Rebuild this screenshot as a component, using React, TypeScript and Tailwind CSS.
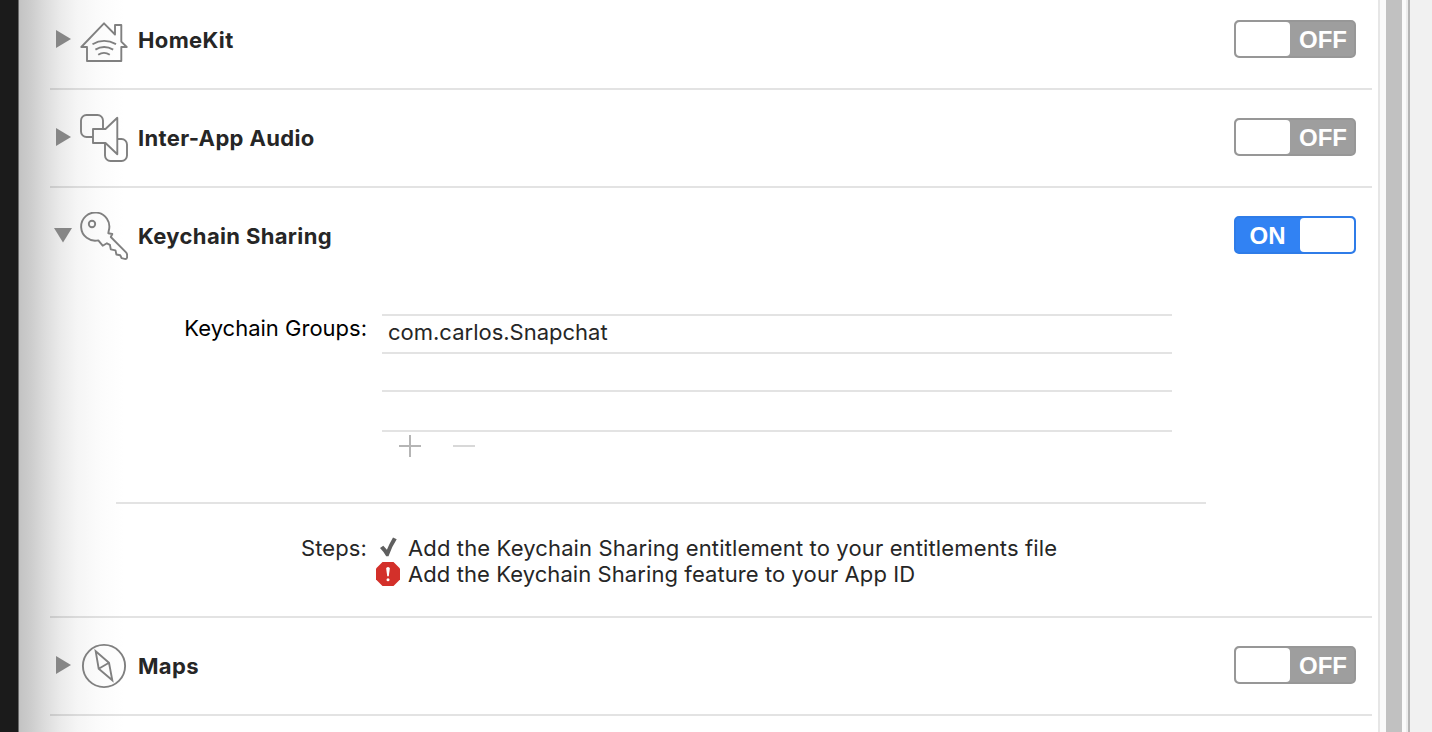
import type { ReactNode } from "react";

function Disclosure({ open }: { open?: boolean }) {
  return (
    <svg className="ml-1 h-[18px] w-[18px] shrink-0 fill-[#868686]" viewBox="0 0 18 18">
      {open ? <path d="M0 2H18L9 16.5Z" /> : <path d="M2 0L17 9L2 18Z" />}
    </svg>
  );
}

function RowIcon({ children }: { children: ReactNode }) {
  return (
    <svg
      className="mt-[2px] ml-2 h-12 w-12 shrink-0"
      viewBox="0 0 48 48"
      fill="none"
      stroke="#808080"
      strokeWidth="1.9"
    >
      {children}
    </svg>
  );
}

function HomeKitIcon() {
  return (
    <RowIcon>
      <path d="M24 7.300L35 18.500V9H41.300V25.600L46.700 31H41.300V45H7V31H1.300Z" strokeLinejoin="round" />
      <path d="M12.500 28.200Q24 21.600 36 28.200M15.400 33.600Q24 28.400 33.200 33.600M18.200 38.800Q24 35 29.800 38.800" />
    </RowIcon>
  );
}

function AudioIcon() {
  return (
    <RowIcon>
      <path d="M13 23H6.500A5.500 5.500 0 0 1 1 17.500V6.500A5.500 5.500 0 0 1 6.500 1H17.500A5.500 5.500 0 0 1 23 6.500V15" />
      <path d="M13 15H25.500L37.300 3.800V40.200L25.500 29H13Z" strokeLinejoin="round" />
      <path d="M25 29V41.500A5.500 5.500 0 0 0 30.500 47H41.500A5.500 5.500 0 0 0 47 41.500V30.500A5.500 5.500 0 0 0 41.500 25H37.300" />
    </RowIcon>
  );
}

function KeyIcon() {
  return (
    <RowIcon>
      <circle cx="12" cy="12" r="3.200" />
      <path
        d="M18.300 28.400A14.100 14.100 0 1 1 28.800 18.500L28.300 21.200L32.300 22L30.800 25L45.800 40.200Q47.200 41.600 47.100 43.200V45.300Q46.800 47.200 44.600 46.900L41.700 46.200L40.200 43.300L36.400 42.500L35.500 38.400L30.800 37.400L29.900 32.800L26.900 31.300L22.700 33.700Z"
        strokeLinejoin="round"
      />
    </RowIcon>
  );
}

function MapsIcon() {
  return (
    <RowIcon>
      <circle cx="24" cy="24" r="21.100" />
      <path d="M15.700 9.300L29 20.700L32.300 38.300L18.700 26.700ZM18.700 26.700L29 20.700" />
    </RowIcon>
  );
}

function Toggle({ on }: { on?: boolean }) {
  return on ? (
    <div className="mr-4 ml-auto flex h-[38px] w-[122px] items-center rounded-[5px] border-2 border-[#2f7ce8] bg-[#3182f3]">
      <span className="flex-1 pt-px pr-px text-center font-['Liberation_Sans',sans-serif] text-2xl leading-[34px] font-bold text-white">ON</span>
      <span className="h-[34px] w-[54px] rounded-[4px] bg-white" />
    </div>
  ) : (
    <div className="mr-4 ml-auto flex h-[38px] w-[122px] items-center rounded-[5px] border-2 border-[#979797] bg-[#9e9e9e]">
      <span className="h-[34px] w-[54px] rounded-[4px] bg-white" />
      <span className="flex-1 pt-px pl-[2px] text-center font-['Liberation_Sans',sans-serif] text-2xl leading-[34px] font-bold text-white">OFF</span>
    </div>
  );
}

function Header({ icon, title, open }: { icon: ReactNode; title: string; open?: boolean }) {
  return (
    <div className="flex h-[94px] items-center">
      <Disclosure open={open} />
      {icon}
      <h2 className="ml-[10px] pt-[2px] text-[22px] leading-7 font-bold tracking-[0.35px] whitespace-nowrap text-[#262626]">{title}</h2>
      <Toggle on={open} />
    </div>
  );
}

function Row({ children }: { children: ReactNode }) {
  return <section className="shrink-0 border-b-2 border-black/11 pb-[2px]">{children}</section>;
}

function KeychainDetails() {
  return (
    <div className="h-[332px] pt-8">
      <div className="flex">
        <div className="w-[317px] text-right text-[22px] leading-7 text-black">Keychain Groups:</div>
        <div className="ml-[15px] w-[790px]">
          <div className="h-10 border-y-2 border-[#e3e3e3] pl-[6px] text-[22px] leading-[33px] text-[#262626]">
            com.carlos.Snapchat
          </div>
          <div className="h-[38px] border-b-2 border-[#e3e3e3]" />
          <div className="h-10 border-b-2 border-[#e3e3e3]" />
          <div className="flex gap-8 pt-[3px] pl-[17px]">
            <svg className="h-[22px] w-[22px]" viewBox="0 0 22 22" stroke="#b5b5b5" strokeWidth="2">
              <path d="M0 11H22M11 0V22" />
            </svg>
            <svg className="h-[22px] w-[22px]" viewBox="0 0 22 22" stroke="#d8d8d8" strokeWidth="2">
              <path d="M0 11H22" />
            </svg>
          </div>
        </div>
      </div>
      <div className="mt-[45px] ml-[66px] h-[2px] w-[1090px] bg-[#e3e3e3]" />
      <div className="mt-[31px] flex text-[22px] leading-[26px] tracking-[0.12px] text-[#262626]">
        <div className="w-[317px] text-right">Steps:</div>
        <ul className="ml-[9px]">
          <li className="flex">
            <svg className="mt-px mr-2 h-6 w-6" viewBox="0 0 24 24">
              <path d="M4 12L7.300 9.800L10.900 13.700Q13.500 7.500 17 1.500L20.700 3.200Q15.500 11 12.500 20.300H10.200Q8 16 4 12Z" fill="#5f5f5f" />
            </svg>
            <span className="tracking-[0.137px]">Add the Keychain Sharing entitlement to your entitlements file</span>
          </li>
          <li className="flex">
            <svg className="mt-px mr-2 h-6 w-6" viewBox="0 0 24 24">
              <path d="M6.500 0H17.500L24 6.500V17.500L17.500 24H6.500L0 17.500V6.500Z" fill="#d3302a" />
              <path d="M10.200 6.500Q10.300 5 12 5T13.800 6.500L12.800 14.300H11.200Z" fill="#fff" />
              <circle cx="12" cy="17.800" r="1.500" fill="#fff" />
            </svg>
            <span className="tracking-[0.08px]">Add the Keychain Sharing feature to your App ID</span>
          </li>
        </ul>
      </div>
    </div>
  );
}

export default function App() {
  return (
    <div className="flex h-[732px] w-[1432px] overflow-hidden bg-white font-['Inter',sans-serif]">
      <div className="w-[19px] shrink-0 border-r border-[#6a6a6a] bg-[#1b1b1b]" />
      <main className="flex w-[1359px] shrink-0 flex-col bg-[linear-gradient(to_right,#c3c3c3_0px,#cdcdcd_12px,#dcdcdc_26px,#ebebeb_42px,#f5f5f5_58px,#fbfbfb_78px,#ffffff_105px)] pr-[6px] pl-[31px]">
        <div className="-mt-2 flex flex-col">
          <Row>
            <Header icon={<HomeKitIcon />} title="HomeKit" />
          </Row>
          <Row>
            <Header icon={<AudioIcon />} title="Inter-App Audio" />
          </Row>
          <Row>
            <Header icon={<KeyIcon />} title="Keychain Sharing" open />
            <KeychainDetails />
          </Row>
          <Row>
            <Header icon={<MapsIcon />} title="Maps" />
          </Row>
        </div>
      </main>
      <div className="w-7 shrink-0 border-l-2 border-[#e6e6e6] bg-[#fafafa] pl-[6px]">
        <div className="h-full w-4 bg-[#c1c1c1]" />
      </div>
      <div className="w-[2px] shrink-0 bg-[#ececec]" />
      <div className="flex-1 border-l-2 border-[#b5b5b5] bg-[#f1f1f1]" />
    </div>
  );
}
